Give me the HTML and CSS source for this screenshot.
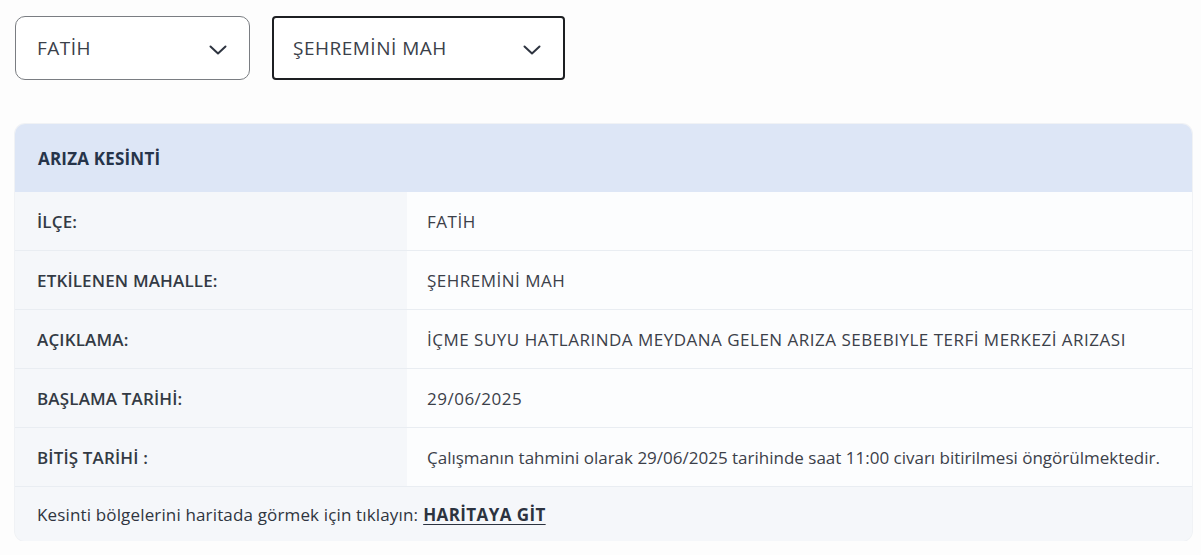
FILE: index.html
```html
<!DOCTYPE html>
<html lang="tr">
<head>
<meta charset="utf-8">
<title>Arıza Kesinti</title>
<link rel="stylesheet" href="styles.css">
</head>
<body>
<div class="page">
  <div class="filters">
    <div class="select select-district">
      <span class="select-text">FATİH</span>
      <svg class="chevron" viewBox="0 0 18 10" width="18" height="10"><path d="M1.5 1.5 L9 8.5 L16.5 1.5" fill="none" stroke="#2e3440" stroke-width="2" stroke-linecap="round" stroke-linejoin="round"/></svg>
    </div>
    <div class="select select-neighbourhood">
      <span class="select-text">ŞEHREMİNİ MAH</span>
      <svg class="chevron" viewBox="0 0 18 10" width="18" height="10"><path d="M1.5 1.5 L9 8.5 L16.5 1.5" fill="none" stroke="#2e3440" stroke-width="2" stroke-linecap="round" stroke-linejoin="round"/></svg>
    </div>
  </div>

  <div class="card">
    <div class="card-header">ARIZA KESİNTİ</div>
    <div class="row">
      <div class="label">İLÇE:</div>
      <div class="value caps">FATİH</div>
    </div>
    <div class="row">
      <div class="label">ETKİLENEN MAHALLE:</div>
      <div class="value caps">ŞEHREMİNİ MAH</div>
    </div>
    <div class="row">
      <div class="label">AÇIKLAMA:</div>
      <div class="value caps">İÇME SUYU HATLARINDA MEYDANA GELEN ARIZA SEBEBIYLE TERFİ MERKEZİ ARIZASI</div>
    </div>
    <div class="row">
      <div class="label">BAŞLAMA TARİHİ:</div>
      <div class="value caps">29/06/2025</div>
    </div>
    <div class="row">
      <div class="label">BİTİŞ TARİHİ :</div>
      <div class="value">Çalışmanın tahmini olarak 29/06/2025 tarihinde saat 11:00 civarı bitirilmesi öngörülmektedir.</div>
    </div>
    <div class="card-footer">Kesinti bölgelerini haritada görmek için tıklayın: <a class="map-link" href="#">HARİTAYA GİT</a></div>
  </div>
</div>
</body>
</html>
```

FILE: styles.css
```css
* { box-sizing: border-box; }

html, body {
  margin: 0;
  background: #fdfdfd;
}

body {
  font-family: "Open Sans", "Noto Sans", sans-serif;
  color: #353b44;
}

.page {
  padding: 16px 9px 0 15px;
}

.filters {
  display: flex;
  gap: 22px;
  height: 64px;
}

.select {
  display: flex;
  align-items: center;
  justify-content: space-between;
  background: #fff;
  padding: 0 22px 0 21px;
}

.select-district {
  width: 235px;
  border: 1px solid #7a7d82;
  border-radius: 10px;
}

.select-neighbourhood {
  width: 293px;
  border: 2px solid #1d1f22;
  border-radius: 4px;
  padding-left: 19px;
  padding-right: 22px;
}

.select-text {
  font-size: 19px;
  letter-spacing: 0.5px;
  color: #3a4049;
}

.chevron { display: block; margin-top: 3px; }

.card {
  margin-top: 44px;
  width: 1177px;
  border-radius: 10px;
  overflow: hidden;
  background: #f5f7fa;
  box-shadow: 0 0 0 1px #f0f2f5;
}

.card-header {
  height: 68px;
  display: flex;
  align-items: center;
  padding-left: 23px;
  background: #dde6f6;
  font-weight: 700;
  font-size: 17px;
  letter-spacing: 0.2px;
  color: #26344a;
}

.row {
  display: grid;
  grid-template-columns: 392px 1fr;
  height: 59px;
  border-bottom: 1px solid #e9edf2;
}

.label,
.value {
  display: flex;
  align-items: center;
}

.label {
  padding-left: 22px;
  background: #f5f7fa;
  color: #333a44;
  font-size: 17px;
  letter-spacing: 0.15px;
  font-weight: 600;
}

.value {
  padding-left: 20px;
  background: #fcfdfe;
  color: #3b4049;
  font-size: 17px;
}

.value.caps {
  letter-spacing: 0.5px;
}

.card-footer {
  height: 54px;
  display: flex;
  align-items: center;
  padding-left: 22px;
  font-size: 17px;
  letter-spacing: 0.15px;
  color: #2f3540;
  background: #f5f7fa;
}

.map-link {
  margin-left: 5px;
  color: #2c3340;
  font-weight: 700;
  letter-spacing: 0.4px;
  text-decoration: underline;
  text-underline-offset: 3px;
}
```
